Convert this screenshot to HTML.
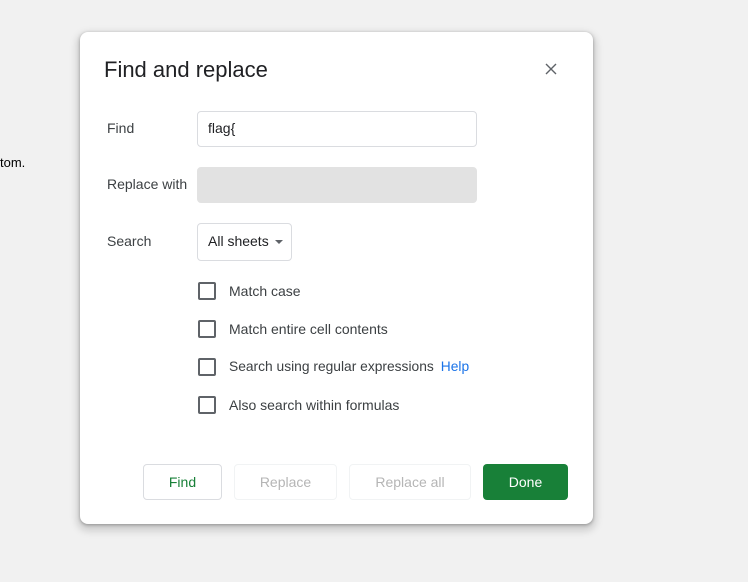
<!DOCTYPE html>
<html><head><meta charset="utf-8"><style>
body{margin:0;width:748px;height:582px;background:#f1f1f1;font-family:"Liberation Sans",Arial,sans-serif;position:relative;overflow:hidden;color:#3c4043}
.a{position:absolute}
.dlg{left:80px;top:32px;width:513px;height:492px;background:#fff;border-radius:8px;box-shadow:0 1px 3px rgba(0,0,0,.3),0 4px 8px 3px rgba(0,0,0,.15)}
.lbl{font-size:14px;color:#3c4043;white-space:nowrap}
.inp{border:1px solid #dadce0;border-radius:4px;box-sizing:border-box}
.cb{width:18px;height:18px;border:2px solid #5f6368;border-radius:2px;box-sizing:border-box}
.btn{box-sizing:border-box;border-radius:4px;font-size:14px;text-align:center;line-height:34px;height:36px}
</style></head><body>
<div class="a" style="left:0;top:155px;font-size:13px;color:#000">tom.</div>
<div class="a dlg">
<div class="a" style="left:24px;top:25px;font-size:22px;color:#202124">Find and replace</div>
<svg class="a" style="left:465px;top:31px" width="12" height="12" viewBox="0 0 12 12"><path d="M1 1L11 11M11 1L1 11" stroke="#5f6368" stroke-width="1.4"/></svg>
<div class="a lbl" style="left:27px;top:88px">Find</div>
<div class="a inp" style="left:117px;top:79px;width:280px;height:36px;padding:8px 10px;font-size:14px;color:#202124">flag{</div>
<div class="a lbl" style="left:27px;top:144px">Replace with</div>
<div class="a inp" style="left:117px;top:135px;width:280px;height:36px;background:#e2e2e2;border-color:#e2e2e2"></div>
<div class="a lbl" style="left:27px;top:201px">Search</div>
<div class="a inp" style="left:117px;top:191px;width:95px;height:38px;padding:9px 10px;font-size:14px;color:#202124;white-space:nowrap">All sheets<span style="display:inline-block;width:0;height:0;border-left:4px solid transparent;border-right:4px solid transparent;border-top:4px solid #5f6368;vertical-align:middle;margin-left:6px"></span></div>
<div class="a cb" style="left:118px;top:250px"></div><div class="a lbl" style="left:149px;top:251px">Match case</div>
<div class="a cb" style="left:118px;top:288px"></div><div class="a lbl" style="left:149px;top:289px">Match entire cell contents</div>
<div class="a cb" style="left:118px;top:326px"></div><div class="a lbl" style="left:149px;top:327px;font-size:13.8px">Search using regular expressions<span style="color:#1a73e8;margin-left:7px">Help</span></div>
<div class="a cb" style="left:118px;top:364px"></div><div class="a lbl" style="left:149px;top:365px">Also search within formulas</div>
<div class="a btn" style="left:63px;top:432px;width:79px;border:1px solid #dadce0;color:#188038">Find</div>
<div class="a btn" style="left:154px;top:432px;width:103px;border:1px solid #f1f3f4;color:#b5b5b5">Replace</div>
<div class="a btn" style="left:269px;top:432px;width:122px;border:1px solid #f1f3f4;color:#b5b5b5">Replace all</div>
<div class="a btn" style="left:403px;top:432px;width:85px;background:#188038;color:#fff;line-height:36px">Done</div>
</div>
</body></html>
